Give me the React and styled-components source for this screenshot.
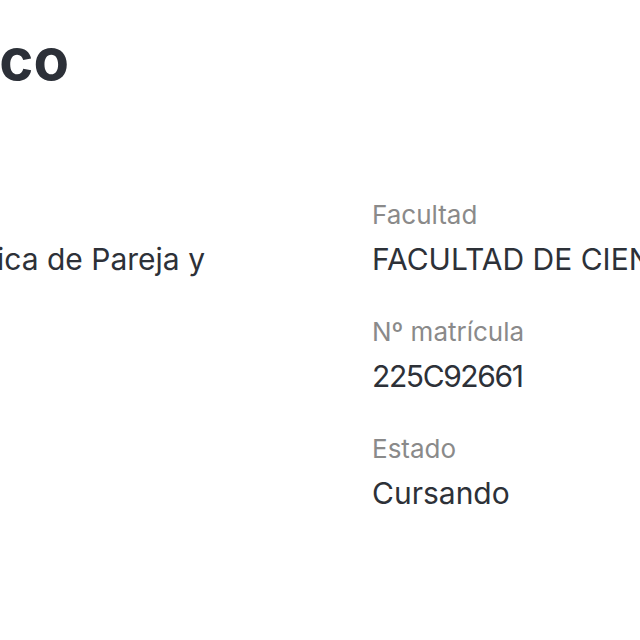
import React from "react";
import styled, { createGlobalStyle } from "styled-components";

const Global = createGlobalStyle`
  html, body { margin: 0; padding: 0; background: #ffffff; overflow: hidden; }
  body { font-family: "Inter", "Lato", "Noto Sans", sans-serif; }
`;

const Viewport = styled.div`
  width: 640px;
  height: 640px;
  overflow: hidden;
  background: #ffffff;
`;

/* The page is scrolled sideways: its left part lies outside the view. */
const Page = styled.main`
  margin-left: -400px;
  width: 1400px;
  padding-top: 25px;
`;

const TitleRow = styled.header`
  display: flex;
  justify-content: flex-end;
  width: 469px;
`;

const Title = styled.h1`
  margin: 0;
  font-size: 58px;
  line-height: 1.2;
  font-weight: 700;
  color: #2c3038;
  white-space: nowrap;
`;

const Columns = styled.section`
  margin-top: 104px;
  display: grid;
  grid-template-columns: 605px 1fr;
  column-gap: 167px;
  align-items: start;
`;

const LeftColumn = styled.div`
  display: flex;
  justify-content: flex-end;
`;

const Stack = styled.div`
  display: flex;
  flex-direction: column;
  gap: 39px;
`;

const Field = styled.div`
  display: flex;
  flex-direction: column;
  gap: 11px;
`;

const Label = styled.div`
  font-size: 26px;
  line-height: 1.2;
  color: #8a8a8a;
  white-space: nowrap;
`;

const Value = styled.div`
  font-size: 30px;
  line-height: 1.2;
  color: #2d3138;
  white-space: nowrap;
  letter-spacing: ${(p) => (p.$code ? "-1.4px" : "0")};
`;

export default function App() {
  return (
    <Viewport>
      <Global />
      <Page>
        <TitleRow>
          <Title>Académico</Title>
        </TitleRow>
        <Columns>
          <LeftColumn>
            <Stack>
              <Field>
                <Label>Programa</Label>
                <Value>
                  Magíster en Psicología Clínica de Pareja y
                  <br />
                  Familia
                </Value>
              </Field>
            </Stack>
          </LeftColumn>
          <Stack>
            <Field>
              <Label>Facultad</Label>
              <Value>FACULTAD DE CIENCIAS SOCIALES</Value>
            </Field>
            <Field>
              <Label>Nº matrícula</Label>
              <Value $code>225C92661</Value>
            </Field>
            <Field>
              <Label>Estado</Label>
              <Value>Cursando</Value>
            </Field>
          </Stack>
        </Columns>
      </Page>
    </Viewport>
  );
}
